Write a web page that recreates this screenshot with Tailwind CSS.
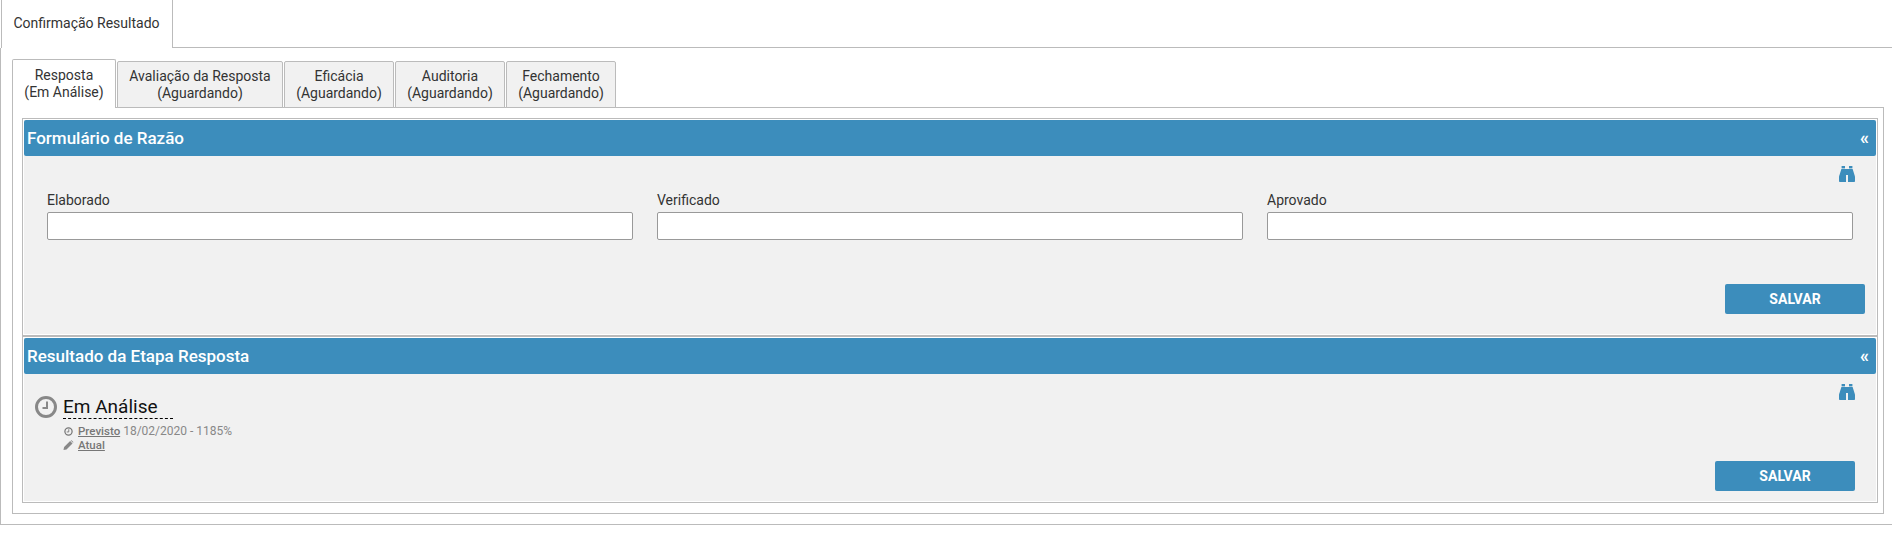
<!DOCTYPE html>
<html lang="pt">
<head>
<meta charset="utf-8">
<script src="https://cdn.jsdelivr.net/npm/@tailwindcss/browser@4"></script>
<title>Confirmação Resultado</title>
</head>
<body class="bg-white font-['Roboto',sans-serif] text-[#333] overflow-hidden">
<div class="h-[540px] w-[1892px]">
  <div class="flex h-[48px]">
    <div class="ml-px flex w-[172px] items-center justify-center border-x border-[#bbb] bg-white pb-px pr-px text-[14px] text-[#333]">Confirmação Resultado</div>
    <div class="flex-1 border-b border-[#bbb]"></div>
  </div>
  <div class="h-[477px] border-b border-l border-[#bbb] pl-[11px] pr-[8px] pt-[11px]">
    <div class="relative z-10 -mb-px flex h-[49px] items-end gap-px text-center text-[14px] leading-[17px] text-[#333]">
      <div class="flex h-[49px] w-[104px] flex-col justify-center rounded-t-[2px] border-x border-t border-[#bbb] bg-white"><span>Resposta</span><span>(Em Análise)</span></div>
      <div class="flex h-[47px] w-[166px] flex-col justify-center rounded-t-[2px] border border-[#bbb] bg-[#f1f1f1] pt-px"><span>Avaliação da Resposta</span><span>(Aguardando)</span></div>
      <div class="flex h-[47px] w-[110px] flex-col justify-center rounded-t-[2px] border border-[#bbb] bg-[#f1f1f1] pt-px"><span>Eficácia</span><span>(Aguardando)</span></div>
      <div class="flex h-[47px] w-[110px] flex-col justify-center rounded-t-[2px] border border-[#bbb] bg-[#f1f1f1] pt-px"><span>Auditoria</span><span>(Aguardando)</span></div>
      <div class="flex h-[47px] w-[110px] flex-col justify-center rounded-t-[2px] border border-[#bbb] bg-[#f1f1f1] pt-px"><span>Fechamento</span><span>(Aguardando)</span></div>
    </div>
    <div class="h-[407px] border border-[#bbb] pl-[9px] pr-[5px] pt-[10px]">
      <section class="h-[218px] border border-[#bbb] bg-white p-px">
        <div class="flex h-full flex-col bg-[#f1f1f1]">
          <div class="flex h-[36px] items-center justify-between rounded-[2px] bg-[#3c8dbc] pl-[3px] pr-[7px] text-white">
            <h2 class="text-[17px] font-medium leading-none">Formulário de Razão</h2>
            <span class="text-[18px] font-bold leading-none">«</span>
          </div>
          <div class="flex justify-end pr-[21px] pt-[10px]">
            <svg class="h-[16px] w-[16px]" viewBox="0 0 16 16" fill="#3c8dbc"><rect x="2.6" y="0" width="3.4" height="2.4"/><rect x="10" y="0" width="3.4" height="2.4"/><path d="M2.4 3H7V16H0.7Q0 16 0 15V10.5Z"/><path d="M13.6 3H9V16H15.3Q16 16 16 15V10.5Z"/><rect x="7" y="3" width="2" height="6"/></svg>
          </div>
          <div class="mt-[10px] grid grid-cols-3 gap-x-[24px] pl-[23px] pr-[23px] text-[14px] leading-[17px] text-[#333]">
            <label class="flex flex-col gap-[3px]"><span>Elaborado</span><input class="h-[28px] rounded-[2px] border border-[#999] bg-white" type="text"></label>
            <label class="flex flex-col gap-[3px]"><span>Verificado</span><input class="h-[28px] rounded-[2px] border border-[#999] bg-white" type="text"></label>
            <label class="flex flex-col gap-[3px]"><span>Aprovado</span><input class="h-[28px] rounded-[2px] border border-[#999] bg-white" type="text"></label>
          </div>
          <div class="mt-[44px] flex justify-end pr-[11px]">
            <button class="h-[30px] w-[140px] rounded-[2px] bg-[#3c8dbc] text-[14px] font-bold text-white">SALVAR</button>
          </div>
        </div>
      </section>
      <section class="h-[167px] border border-[#bbb] bg-white p-px">
        <div class="flex h-full flex-col bg-[#f1f1f1]">
          <div class="flex h-[36px] items-center justify-between rounded-[2px] bg-[#3c8dbc] pl-[3px] pr-[7px] text-white">
            <h2 class="text-[17px] font-medium leading-none">Resultado da Etapa Resposta</h2>
            <span class="text-[18px] font-bold leading-none">«</span>
          </div>
          <div class="relative flex-1">
            <svg class="absolute right-[21px] top-[10px] h-[16px] w-[16px]" viewBox="0 0 16 16" fill="#3c8dbc"><rect x="2.6" y="0" width="3.4" height="2.4"/><rect x="10" y="0" width="3.4" height="2.4"/><path d="M2.4 3H7V16H0.7Q0 16 0 15V10.5Z"/><path d="M13.6 3H9V16H15.3Q16 16 16 15V10.5Z"/><rect x="7" y="3" width="2" height="6"/></svg>
            <div class="flex pl-[11px] pt-[21px]">
              <svg class="mt-px h-[22px] w-[22px] shrink-0" viewBox="0 0 22 22" fill="none" stroke="#888"><circle cx="11" cy="11" r="9.5" stroke-width="3"/><path d="M12 5.5V12H7.5" stroke-width="2"/></svg>
              <div class="ml-[6px]">
                <div class="w-[110px] border-b border-dashed border-black text-[19px] leading-[23px] text-[#111]">Em Análise</div>
                <div class="mt-[5px] flex items-center text-[12px] leading-[14px] text-[#888]">
                  <svg class="ml-px mr-[5px] h-[9px] w-[9px]" viewBox="0 0 10 10" fill="none" stroke="#777"><circle cx="5" cy="5" r="4" stroke-width="1.4"/><path d="M5.3 2.5V5.5H3" stroke-width="1"/></svg>
                  <span class="text-[11.5px] font-medium text-[#777] underline">Previsto</span><span class="ml-[3px]">18/02/2020 - 1185%</span>
                </div>
                <div class="flex items-center text-[12px] leading-[14px] text-[#888]">
                  <svg class="mr-[4px] h-[10px] w-[11px]" viewBox="0 0 10 10" fill="#888"><path d="M0 10L.6 7 6.6 1 9 3.4 3 9.4Z"/><path d="M7.3.4Q7.8 0 8.3.4L9.6 1.7Q10 2.2 9.6 2.7L9.5 2.8 7.2.5Z"/></svg>
                  <span class="text-[11.5px] font-medium text-[#777] underline">Atual</span>
                </div>
              </div>
            </div>
            <button class="absolute bottom-[10px] right-[21px] h-[30px] w-[140px] rounded-[2px] bg-[#3c8dbc] text-[14px] font-bold text-white">SALVAR</button>
          </div>
        </div>
      </section>
    </div>
  </div>
</div>
</body>
</html>
